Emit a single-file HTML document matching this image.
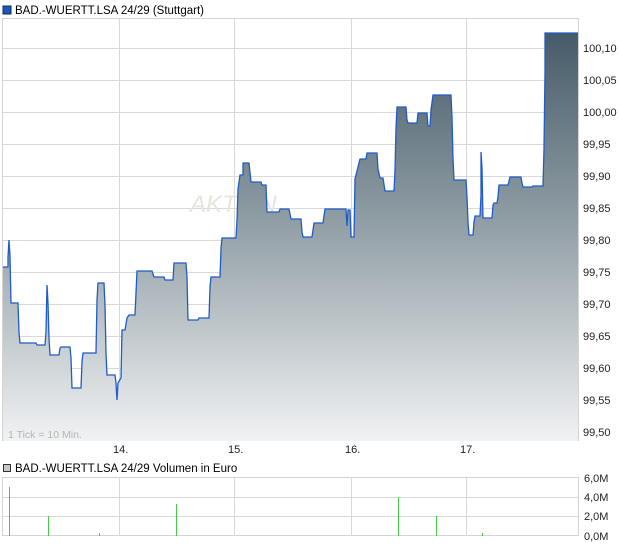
<!DOCTYPE html>
<html><head><style>
body{margin:0;background:#fff;width:620px;height:546px;overflow:hidden;font-family:"Liberation Sans",sans-serif;}
</style></head><body>
<svg width="620" height="546" viewBox="0 0 620 546" xmlns="http://www.w3.org/2000/svg" font-family="Liberation Sans, sans-serif">
<defs>
<linearGradient id="g" x1="0" y1="33" x2="0" y2="441" gradientUnits="userSpaceOnUse">
<stop offset="0" stop-color="#465b69"/>
<stop offset="0.45" stop-color="#8e9ca3"/>
<stop offset="1" stop-color="#f1f2f3"/>
</linearGradient>
</defs>
<rect x="3" y="6" width="8" height="8" fill="#1f56b8" stroke="#0c2a66" stroke-width="1"/>
<text x="15" y="14" font-size="11.5" fill="#000">BAD.-WUERTT.LSA 24/29 (Stuttgart)</text>
<rect x="2.5" y="18.5" width="576" height="422" fill="#fff" stroke="#d4d4d4"/>
<g stroke="#d9d9d9" stroke-width="1">
<line x1="3" y1="48.5" x2="578" y2="48.5"/><line x1="3" y1="80.5" x2="578" y2="80.5"/><line x1="3" y1="112.5" x2="578" y2="112.5"/><line x1="3" y1="144.5" x2="578" y2="144.5"/><line x1="3" y1="176.5" x2="578" y2="176.5"/><line x1="3" y1="208.5" x2="578" y2="208.5"/><line x1="3" y1="240.5" x2="578" y2="240.5"/><line x1="3" y1="272.5" x2="578" y2="272.5"/><line x1="3" y1="304.5" x2="578" y2="304.5"/><line x1="3" y1="336.5" x2="578" y2="336.5"/><line x1="3" y1="368.5" x2="578" y2="368.5"/><line x1="3" y1="400.5" x2="578" y2="400.5"/>
<line x1="119.5" y1="19" x2="119.5" y2="441"/><line x1="234.5" y1="19" x2="234.5" y2="441"/><line x1="351.5" y1="19" x2="351.5" y2="441"/><line x1="466.5" y1="19" x2="466.5" y2="441"/>
</g>
<text x="190" y="212" font-size="24" fill="#e8e4de" font-style="italic">AKTIEN</text>
<path d="M3 267 H8 V257 L9 240 L10 256 L11 303 H18 L19 333 L20 343 H36 L37 345 H45 L46 332 L47 285 L48 303 L49 338 L50 355 H59 L60 348 L61 347 H70 L71 358 L72 388 H81 L82 362 L83 353 H96 L97 300 L98 283 H104 L105 305 L106 353 L107 375 H115 L116 383 L117 400 L118 383 L121 378 L122 330 H125 L127 318 L129 315 H135 L136 293 L137 271 H152 L154 277 H164 L165 280 H173 L174 263 H186 L187 277 L188 320 H198 L199 318 H209 L210 287 L211 277 H220 L221 248 L222 238 H236 L237 220 L238 189 L240 175 H243 V163 H249 L251 182 H261 L262 185 H266 L267 212 H279 L280 209 H289 L291 219 H301 L302 232 L303 237 H312 L313 230 L314 223 H323 L325 209 H346 L347 226 L348 210 H350 L351 237 H354 L355 179 L360 159 H366 L367 153 H377 L378 169 L380 178 H383 L385 191 H394 L395 170 L396 128 L397 107 H406 L407 120 L408 123 H417 L418 113 H427 L428 126 H430 L431 110 L433 95 H451 L452 117 L453 158 L454 180 H466 L467 197 L468 222 L469 235 H473 L474 222 L475 216 H480 L481 195 L481 152 L482 168 L483 218 H492 L493 205 L494 203 H497 L498 197 L499 185 H508 L510 177 H521 L522 183 L523 187 H532 L533 186 H543 L544 148 L545 72 L545 33 H578 V441 H3 Z" fill="url(#g)"/>
<path d="M3 267 H8 V257 L9 240 L10 256 L11 303 H18 L19 333 L20 343 H36 L37 345 H45 L46 332 L47 285 L48 303 L49 338 L50 355 H59 L60 348 L61 347 H70 L71 358 L72 388 H81 L82 362 L83 353 H96 L97 300 L98 283 H104 L105 305 L106 353 L107 375 H115 L116 383 L117 400 L118 383 L121 378 L122 330 H125 L127 318 L129 315 H135 L136 293 L137 271 H152 L154 277 H164 L165 280 H173 L174 263 H186 L187 277 L188 320 H198 L199 318 H209 L210 287 L211 277 H220 L221 248 L222 238 H236 L237 220 L238 189 L240 175 H243 V163 H249 L251 182 H261 L262 185 H266 L267 212 H279 L280 209 H289 L291 219 H301 L302 232 L303 237 H312 L313 230 L314 223 H323 L325 209 H346 L347 226 L348 210 H350 L351 237 H354 L355 179 L360 159 H366 L367 153 H377 L378 169 L380 178 H383 L385 191 H394 L395 170 L396 128 L397 107 H406 L407 120 L408 123 H417 L418 113 H427 L428 126 H430 L431 110 L433 95 H451 L452 117 L453 158 L454 180 H466 L467 197 L468 222 L469 235 H473 L474 222 L475 216 H480 L481 195 L481 152 L482 168 L483 218 H492 L493 205 L494 203 H497 L498 197 L499 185 H508 L510 177 H521 L522 183 L523 187 H532 L533 186 H543 L544 148 L545 72 L545 33 H578" fill="none" stroke="#1f5cc8" stroke-width="1.3"/>
<text x="8" y="438" font-size="10.5" fill="#b5b5b5">1 Tick = 10 Min.</text>
<g font-size="11" fill="#222">
<text x="583" y="52">100,10</text><text x="583" y="84">100,05</text><text x="583" y="116">100,00</text><text x="583" y="148">99,95</text><text x="583" y="180">99,90</text><text x="583" y="212">99,85</text><text x="583" y="244">99,80</text><text x="583" y="276">99,75</text><text x="583" y="308">99,70</text><text x="583" y="340">99,65</text><text x="583" y="372">99,60</text><text x="583" y="404">99,55</text><text x="583" y="436">99,50</text>
<text x="113" y="453">14.</text><text x="228" y="453">15.</text><text x="345" y="453">16.</text><text x="460" y="453">17.</text>
</g>
<rect x="3.5" y="464.5" width="7" height="7" fill="#c8c8c8" stroke="#333"/>
<text x="15" y="472" font-size="11.5" fill="#000">BAD.-WUERTT.LSA 24/29 Volumen in Euro</text>
<rect x="2.5" y="477.5" width="576" height="58" fill="#fff" stroke="#d4d4d4"/>
<g stroke="#d9d9d9"><line x1="3" y1="497.5" x2="578" y2="497.5"/><line x1="3" y1="516.5" x2="578" y2="516.5"/>
<line x1="119.5" y1="478" x2="119.5" y2="536"/><line x1="234.5" y1="478" x2="234.5" y2="536"/><line x1="351.5" y1="478" x2="351.5" y2="536"/><line x1="466.5" y1="478" x2="466.5" y2="536"/></g>
<g stroke="#44cc44" stroke-width="1">
<line x1="9.5" y1="487" x2="9.5" y2="536"/><line x1="48.5" y1="516" x2="48.5" y2="536"/><line x1="99.5" y1="533" x2="99.5" y2="536"/><line x1="176.5" y1="504" x2="176.5" y2="536"/><line x1="398.5" y1="497" x2="398.5" y2="536"/><line x1="436.5" y1="516" x2="436.5" y2="536"/><line x1="482.5" y1="533" x2="482.5" y2="536"/>
</g>
<g font-size="11" fill="#222"><text x="584" y="482">6,0M</text><text x="584" y="501">4,0M</text><text x="584" y="520">2,0M</text><text x="584" y="540">0,0M</text></g>
</svg>
</body></html>
